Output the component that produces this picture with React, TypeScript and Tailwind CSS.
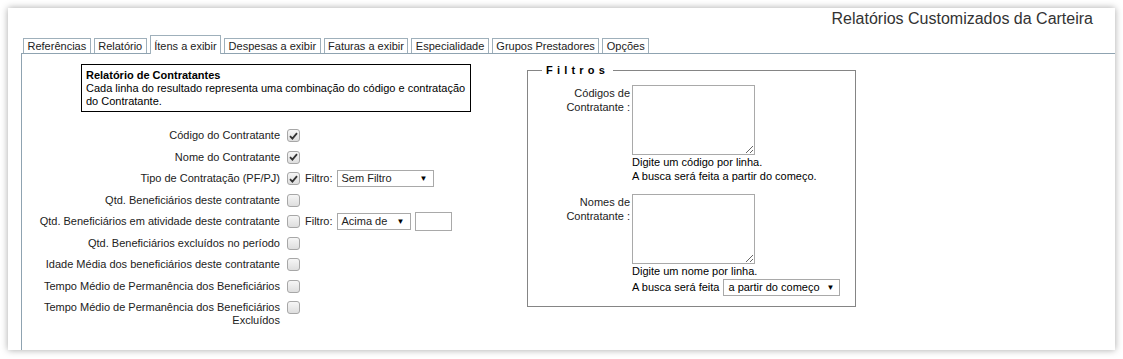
import React from "react";

const tabs = [
  "Referências",
  "Relatório",
  "Ítens a exibir",
  "Despesas a exibir",
  "Faturas a exibir",
  "Especialidade",
  "Grupos Prestadores",
  "Opções",
];

type Row = { label: React.ReactNode; checked: boolean; extra?: "tipo" | "qtd" };

const rows: Row[] = [
  { label: "Código do Contratante", checked: true },
  { label: "Nome do Contratante", checked: true },
  { label: "Tipo de Contratação (PF/PJ)", checked: true, extra: "tipo" },
  { label: "Qtd. Beneficiários deste contratante", checked: false },
  { label: "Qtd. Beneficiários em atividade deste contratante", checked: false, extra: "qtd" },
  { label: "Qtd. Beneficiários excluídos no período", checked: false },
  { label: "Idade Média dos beneficiários deste contratante", checked: false },
  { label: "Tempo Médio de Permanência dos Beneficiários", checked: false },
  {
    label: (
      <>
        Tempo Médio de Permanência dos Beneficiários
        <br />
        Excluídos
      </>
    ),
    checked: false,
  },
];

function Checkbox({ checked }: { checked: boolean }) {
  return (
    <div className="w-[13px] h-[13px] shrink-0 rounded-[3px] border border-[#a7a7a7] bg-gradient-to-b from-[#f6f6f6] to-[#dedede] flex items-center justify-center">
      {checked && (
        <svg width="9" height="8" viewBox="0 0 9 8">
          <path d="M1 4.2 L3.4 6.6 L8 1.2" fill="none" stroke="#333" strokeWidth="1.8" />
        </svg>
      )}
    </div>
  );
}

function FakeSelect({ text, width }: { text: string; width: string }) {
  return (
    <div className={`${width} h-[17px] border border-[#a9a9a9] bg-white flex items-center justify-between pl-[4px] pr-[5px] leading-[15px]`}>
      <span>{text}</span>
      <span className="text-[8px] text-black">▼</span>
    </div>
  );
}

export default function App() {
  return (
    <div
      className="w-[1123px] h-[359px] bg-white p-[8px] text-[11px] text-[#222]"
      style={{ fontFamily: '"Liberation Sans", Arial, sans-serif' }}
    >
      <div className="h-[342px] w-[1107px] bg-white shadow-[0_0_7px_rgba(0,0,0,0.35)] flex flex-col">
        {/* Title */}
        <div className="pt-[2px] pr-[22px] text-right text-[16px] leading-[18px] text-[#333]">
          Relatórios Customizados da Carteira
        </div>

        {/* Tabs */}
        <div className="mt-[7px] ml-[15px] flex items-end gap-[3px] relative z-10">
          {tabs.map((t, i) =>
            i === 2 ? (
              <div
                key={t}
                className="h-[19px] -mb-px px-[3.5px] pt-[3px] leading-[14px] bg-white border border-b-0 border-[#9fb0bb] whitespace-nowrap"
              >
                {t}
              </div>
            ) : (
              <div
                key={t}
                className="h-[15px] px-[3.5px] leading-[14px] bg-white border border-b-0 border-[#9fb0bb] whitespace-nowrap"
              >
                {t}
              </div>
            )
          )}
        </div>

        {/* Content */}
        <div className="ml-[13px] flex-1 border-t border-l border-[#8fa3b1] flex">
          {/* Left column */}
          <div className="w-[505px] shrink-0">
            <div className="mt-[10px] ml-[59px] w-[390px] border border-black pl-[4px] pt-[4px] pb-[3px] leading-[13px] text-black">
              <div className="font-bold">Relatório de Contratantes</div>
              <div>
                Cada linha do resultado representa uma combinação do código e contratação
                <br />
                do Contratante.
              </div>
            </div>

            <div className="mt-[13px] flex flex-col">
              {rows.map((r, i) => (
                <div key={i} className="min-h-[21.5px] flex items-start">
                  <div className="w-[258px] shrink-0 text-right leading-[13px] pt-[4px]">{r.label}</div>
                  <div className="ml-[7px] pt-[4px]">
                    <Checkbox checked={r.checked} />
                  </div>
                  {r.extra === "tipo" && (
                    <div className="ml-[5px] flex items-center gap-[4px] pt-[2px]">
                      <span>Filtro:</span>
                      <FakeSelect text="Sem Filtro" width="w-[97px]" />
                    </div>
                  )}
                  {r.extra === "qtd" && (
                    <div className="ml-[5px] flex items-center gap-[4px] pt-[1px]">
                      <span>Filtro:</span>
                      <FakeSelect text="Acima de" width="w-[74px]" />
                      <div className="w-[37px] h-[19px] border border-[#a9a9a9] bg-white" />
                    </div>
                  )}
                </div>
              ))}
            </div>
          </div>

          {/* Filtros fieldset */}
          <fieldset className="mt-[10px] w-[329px] h-[243px] border border-[#858585] px-0 pb-[9px] self-start">
            <legend className="ml-[14px] px-[4px] font-bold leading-[13px] tracking-[4.2px] text-black">
              Filtros
            </legend>
            <div className="pt-[8px] flex flex-col">
              <div className="flex items-start">
                <div className="w-[102px] shrink-0 text-right leading-[14px] pt-[1px]">
                  Códigos de
                  <br />
                  Contratante :
                </div>
                <div className="ml-[2px] flex flex-col">
                  <textarea className="block w-[123px] h-[70px] border border-[#a9a9a9] bg-white outline-none" />
                  <div className="leading-[14px] text-black">
                    Digite um código por linha.
                    <br />
                    A busca será feita a partir do começo.
                  </div>
                </div>
              </div>

              <div className="mt-[11px] flex items-start">
                <div className="w-[102px] shrink-0 text-right leading-[14px] pt-[1px]">
                  Nomes de
                  <br />
                  Contratante :
                </div>
                <div className="ml-[2px] flex flex-col">
                  <textarea className="block w-[123px] h-[70px] border border-[#a9a9a9] bg-white outline-none" />
                  <div className="leading-[14px] text-black">Digite um nome por linha.</div>
                  <div className="h-[18px] flex items-center gap-[4px] text-black whitespace-nowrap">
                    <span>A busca será feita</span>
                    <FakeSelect text="a partir do começo" width="w-[117px]" />
                  </div>
                </div>
              </div>
            </div>
          </fieldset>
        </div>
      </div>
    </div>
  );
}
